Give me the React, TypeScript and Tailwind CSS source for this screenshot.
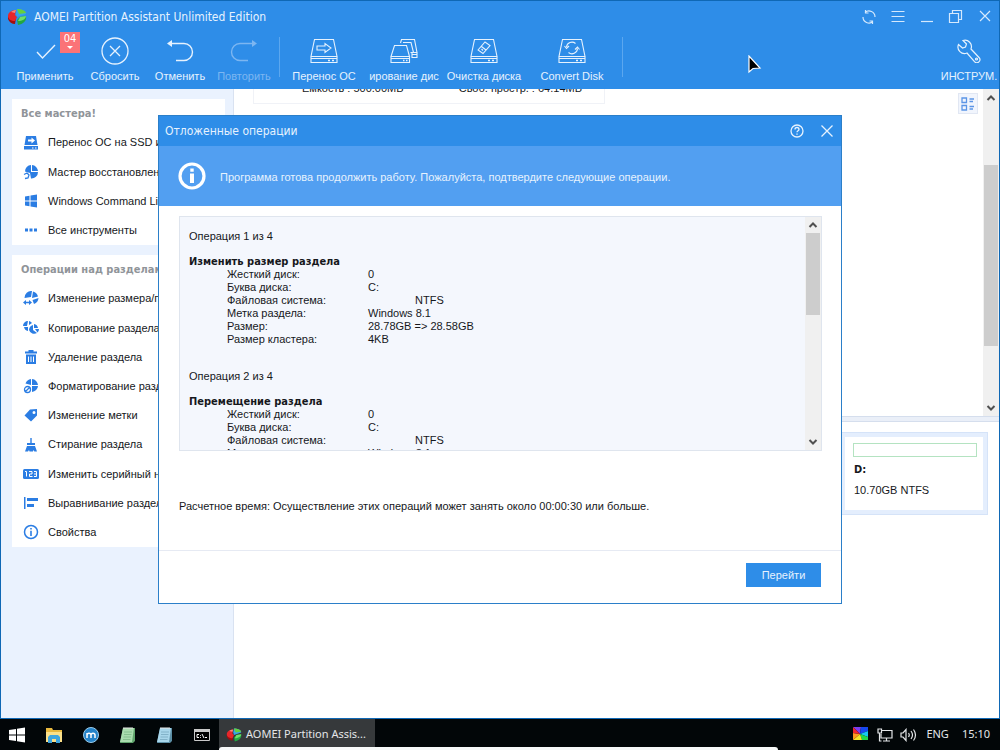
import type { ReactNode } from 'react';

const line = 'fill-none stroke-current';

function AomeiLogo({ className }: { className: string }) {
  return (
    <svg viewBox="0 0 20 16" className={className} aria-hidden="true">
      <path d="M1 7v3c1 3 4 5 7 5l1-6z" fill="#a30d0d" />
      <path d="M9 1C4 1 1 4 1 7c0 3 3 5 7 5l2-4-2-2z" fill="#e8262a" />
      <path d="M4 3l4 1 1-3C7 1 5 2 4 3z" fill="#f08a80" />
      <path d="M10 0c5 0 9 2 9 5l-9 3-1-3z" fill="#37a5e8" />
      <path d="M10 0c4 0 8 1 9 4l-7 1z" fill="#66d03d" />
      <path d="M19 7c1 5-3 8-8 9l-1-5 3-3z" fill="#22a641" />
      <path d="M19 7c0 3-4 5-8 5l2-4z" fill="#6fe06a" />
    </svg>
  );
}

function Drive({ children }: { children?: ReactNode }) {
  return (
    <svg viewBox="0 0 28 26" className="h-[26px] w-7" aria-hidden="true">
      <g className={line} strokeWidth="1.1">
        <path d="M4.5 1.5h19l3.5 17H1z M1 18.5h26v6H1z M1 20.5h26" />
        <path d="M18 22.5h2M22 22.5h2" strokeWidth="1.5" />
        {children}
      </g>
    </svg>
  );
}

function CopyDrives() {
  return (
    <svg viewBox="0 0 28 26" className="h-[26px] w-7" aria-hidden="true">
      <g className={line} strokeWidth="1.1">
        <path d="M4.500 7.500h12l3 11H1z M1 18.500h18.500v6H1z M1 20.500h18.500" />
        <path d="M10.500 5l1-3.500h13l2.500 13h-6.500M13 4.500h8l2.500 10M22 14.500h5v5h-5v-5M22 16.500h5" />
        <path d="M13 22.500h1.500M16 22.500h1.500" strokeWidth="1.5" />
      </g>
    </svg>
  );
}

const toolIcons = {
  apply: (
    <svg viewBox="0 0 28 28" className="h-7 w-7" aria-hidden="true">
      <path d="M6 15l5.500 6L24 8" className={line} strokeWidth="1.4" />
    </svg>
  ),
  discard: (
    <svg viewBox="0 0 28 28" className="h-7 w-7" aria-hidden="true">
      <path d="M14 1a13 13 0 100 26 13 13 0 000-26M9 9l10 10M19 9L9 19" className={line} strokeWidth="1.3" />
    </svg>
  ),
  undo: (
    <svg viewBox="0 0 28 28" className="h-7 w-7" aria-hidden="true">
      <path d="M4 6.500h14a8 8 0 010 17H10" className={line} strokeWidth="1.4" />
      <path d="M1 6.500L6 3v7z" className="fill-current" />
    </svg>
  ),
  redo: (
    <svg viewBox="0 0 28 28" className="h-7 w-7" aria-hidden="true">
      <path d="M24 6.500H10a8 8 0 000 17h8" className={line} strokeWidth="1.4" />
      <path d="M27 6.500L22 3v7z" className="fill-current" />
    </svg>
  ),
};

function Tool({ label, icon, width, disabled, badge }: { label: string; icon: ReactNode; width: string; disabled?: boolean; badge?: string }) {
  return (
    <button
      type="button"
      disabled={disabled}
      className={`relative flex shrink-0 flex-col items-center gap-[3px] whitespace-nowrap ${width} ${disabled ? 'text-[#7cb6f1]' : 'text-[#e6f2fe]'}`}
    >
      <span className="flex h-7 items-center">{icon}</span>
      <span className="leading-4">{label}</span>
      {badge && (
        <span className="absolute -top-[5px] left-[50px] flex h-[21px] w-5 flex-col items-center bg-[#fb7377] font-['DejaVu_Sans_Condensed','DejaVu_Sans',sans-serif] leading-[14px] text-white">
          {badge}
          <svg viewBox="0 0 6 3" className="h-[3px] w-[6px] fill-white" aria-hidden="true">
            <path d="M0 0h6L3 3z" />
          </svg>
        </span>
      )}
    </button>
  );
}

function Glyph({ children }: { children: ReactNode }) {
  return (
    <svg viewBox="0 0 16 16" className="h-4 w-4 shrink-0 fill-[#2b7de3]" aria-hidden="true">
      {children}
    </svg>
  );
}

const wizards = [
  {
    label: 'Перенос ОС на SSD или HDD',
    icon: (
      <Glyph>
        <path fillRule="evenodd" d="M3 1h10l1.500 9h-13zM5 4.500v2h3.500v2L12 5.500 8.500 2.500v2z" />
        <path fillRule="evenodd" d="M1 11h14v3.500H1zM9 12.500v1h1.500v-1zM12 12.500v1h1.500v-1z" />
      </Glyph>
    ),
  },
  {
    label: 'Мастер восстановления',
    icon: (
      <Glyph>
        <path d="M9 1a6.500 6.500 0 016 6H9zM8 1v7h7a6.500 6.500 0 01-7 6.500L7 9 2 7.500A6.500 6.500 0 018 1z" />
        <path d="M1 10.500l3-1.500 2 2-1 3-3 .5" className="fill-none stroke-[#2b7de3]" strokeWidth="1.3" />
      </Glyph>
    ),
  },
  {
    label: 'Windows Command Line',
    icon: (
      <Glyph>
        <path d="M2 3.500l4.500-.7v4.700H2zM7.500 2.600L14 1.500v6H7.500zM2 8.500h4.500v4.700L2 12.500zM7.500 8.500H14v6l-6.500-1.100z" />
      </Glyph>
    ),
  },
  {
    label: 'Все инструменты',
    icon: (
      <Glyph>
        <path d="M2 6.500h3v3H2zM6.500 6.500h3v3h-3zM11 6.500h3v3h-3z" />
      </Glyph>
    ),
  },
];

const operations = [
  {
    label: 'Изменение размера/перемещение',
    icon: (
      <Glyph>
        <path d="M9 0a7 7 0 00-7.500 7L8 6zM10 .5a7 7 0 015 5L9 7zM9.500 9L15.500 7a7 7 0 01-4.500 6z" />
        <path d="M0 11.500L3 9v1.700h3V9l3 2.500L6 14v-1.700H3V14z" />
      </Glyph>
    ),
  },
  {
    label: 'Копирование раздела',
    icon: (
      <Glyph>
        <path d="M5 1a5 5 0 00-5 5h4zM6 1a5 5 0 013 2L6 5zM1 7l4 0v4a5 5 0 01-4-4z" />
        <path d="M10 5v5l4 3a5.500 5.500 0 01-8-3 5.500 5.500 0 014-5zM11 4a5 5 0 014 4h-4zM12 9h4a5 5 0 01-1.500 3.500z" />
      </Glyph>
    ),
  },
  {
    label: 'Удаление раздела',
    icon: (
      <Glyph>
        <path fillRule="evenodd" d="M5.500 1h5v1.500H14v2H2v-2h3.500zM3 5.500h10V15H3zM5 7.500v5.500h1V7.500zM7.500 7.500v5.500h1V7.500zM10 7.500v5.500h1V7.500z" />
      </Glyph>
    ),
  },
  {
    label: 'Форматирование раздела',
    icon: (
      <Glyph>
        <path d="M8 1a7 7 0 00-5.500 4.500L8 7zM9 1a6.500 6.500 0 016 6H9zM9 8h6a6.500 6.500 0 01-6 6z" />
        <path d="M4.500 8.500a3 3 0 100 6 3 3 0 000-6M2.500 13.500l4-4" className="fill-none stroke-[#2b7de3]" strokeWidth="1.3" />
      </Glyph>
    ),
  },
  {
    label: 'Изменение метки',
    icon: (
      <Glyph>
        <path fillRule="evenodd" d="M7 2.500L14 2v6.500L8 14.500 1.500 8.500zM11 4a1.500 1.500 0 100 3 1.500 1.500 0 000-3z" />
      </Glyph>
    ),
  },
  {
    label: 'Стирание раздела',
    icon: (
      <Glyph>
        <path d="M7.300 1h1.400v5H12v2H4V6h3.300zM4 9h8l2 5.500h-2.500L10 13v1.500H6.500L6 13l-1 1.500H2z" />
      </Glyph>
    ),
  },
  {
    label: 'Изменить серийный номер',
    icon: (
      <Glyph>
        <rect x="0" y="3" width="16" height="10" rx="1.500" />
        <path d="M2 5.500h1.500v5M6 5.500h3v2.500H6.500v2.500H9.500M11 5.500h2.500v5H11M11 8h2.500" className="fill-none stroke-white" />
      </Glyph>
    ),
  },
  {
    label: 'Выравнивание разделов',
    icon: (
      <Glyph>
        <path d="M1 2h1.500v12H1zM4 3h11v3H4zM4 9h7v3H4z" />
      </Glyph>
    ),
  },
  {
    label: 'Свойства',
    icon: (
      <Glyph>
        <circle cx="8" cy="8" r="6.500" className="fill-none stroke-[#2b7de3]" strokeWidth="1.500" />
        <path d="M7.200 4h1.600v1.600H7.200zM7.200 6.800h1.600V12H7.200z" />
      </Glyph>
    ),
  },
];

function SideCard({ title, items, listHeight }: { title: string; items: { label: string; icon: ReactNode }[]; listHeight: string }) {
  return (
    <section className="overflow-hidden bg-white">
      <h2 className="flex h-[29px] items-center whitespace-nowrap pl-[9px] pt-[2px] font-['DejaVu_Sans_Condensed','DejaVu_Sans',sans-serif] text-[11px] font-bold text-[#909499]">{title}</h2>
      <ul className={`flex flex-col ${listHeight}`}>
        {items.map((item) => (
          <li key={item.label} className="flex flex-1">
            <button type="button" className="flex w-full items-center gap-[9px] whitespace-nowrap pl-[11px] text-left">
              {item.icon}
              {item.label}
            </button>
          </li>
        ))}
      </ul>
    </section>
  );
}

function Chevron({ up }: { up?: boolean }) {
  return (
    <svg viewBox="0 0 10 8" className="h-2 w-[10px] shrink-0 fill-none stroke-[#505050]" strokeWidth="2" aria-hidden="true">
      <path d={up ? 'M1.500 6L5 2.500 8.500 6' : 'M1.500 2L5 5.500 8.500 2'} />
    </svg>
  );
}

const pending = [
  {
    step: 'Операция 1 из 4',
    title: 'Изменить размер раздела',
    rows: [
      ['Жесткий диск:', '0'],
      ['Буква диска:', 'C:'],
      ['Файловая система:', 'NTFS'],
      ['Метка раздела:', 'Windows 8.1'],
      ['Размер:', '28.78GB => 28.58GB'],
      ['Размер кластера:', '4KB'],
    ],
  },
  {
    step: 'Операция 2 из 4',
    title: 'Перемещение раздела',
    rows: [
      ['Жесткий диск:', '0'],
      ['Буква диска:', 'C:'],
      ['Файловая система:', 'NTFS'],
      ['Метка раздела:', 'Windows 8.1'],
    ],
  },
];

function PendingDialog() {
  return (
    <div role="dialog" aria-labelledby="dialog-title" className="flex w-[684px] flex-col border border-[#2b7fc9] bg-white">
      <header className="flex h-[30px] items-center bg-[#2e8de8] pl-[6px] pr-[7px] text-[#e6f2fe]">
        <h1 id="dialog-title" className="flex-1 font-['DejaVu_Sans_Condensed','DejaVu_Sans',sans-serif] text-[12px]">Отложенные операции</h1>
        <button type="button" aria-label="Справка" className="mr-4">
          <svg viewBox="0 0 14 14" className={`h-[14px] w-[14px] ${line}`} strokeWidth="1.300" aria-hidden="true">
            <circle cx="7" cy="7" r="6" />
            <path d="M5 5.500a2 2 0 114 0c0 1.300-2 1.300-2 2.700M7 9.500v1.300" />
          </svg>
        </button>
        <button type="button" aria-label="Закрыть">
          <svg viewBox="0 0 14 14" className={`h-[14px] w-[14px] ${line}`} strokeWidth="1.300" aria-hidden="true">
            <path d="M1.500 1.500l11 11M12.500 1.500l-11 11" />
          </svg>
        </button>
      </header>
      <div className="flex h-[60px] items-center gap-[14px] bg-[#529ff1] pl-[19px] text-[#e6f2fe]">
        <svg viewBox="0 0 28 28" className="h-7 w-7 fill-white" aria-hidden="true">
          <circle cx="14" cy="14" r="12" className="fill-none stroke-white" strokeWidth="3.200" />
          <path d="M12.300 6.500h3.400v3.200h-3.400zM12 11.500h4V21h-4z" />
        </svg>
        <p className="pt-[2px]">Программа готова продолжить работу. Пожалуйста, подтвердите следующие операции.</p>
      </div>
      <div className="ml-5 mr-[19px] mt-[10px] flex h-[235px] border border-[#dfe5ee] bg-[#f4f7fd]">
        <div className="min-w-0 flex-1 overflow-hidden pl-[9px] pt-[13px] text-[#16181c]">
          {pending.map((op) => (
            <section key={op.step} className="mb-6 leading-[13px]">
              <p>{op.step}</p>
              <h2 className="mt-3 font-['DejaVu_Sans_Condensed','DejaVu_Sans',sans-serif] font-bold">{op.title}</h2>
              <dl className="grid grid-cols-[141px_1fr] pl-[38px]">
                {op.rows.map(([name, value]) => (
                  <div key={name} className="contents">
                    <dt>{name}</dt>
                    <dd className={value === 'NTFS' ? 'pl-[47px]' : ''}>{value}</dd>
                  </div>
                ))}
              </dl>
            </section>
          ))}
        </div>
        <div className="flex w-4 flex-col items-center bg-[#f0f0f0] pb-1 pt-1">
          <Chevron up />
          <div className="mt-1 h-[82px] w-[14px] bg-[#cdcdcd]" />
          <div className="flex-1" />
          <Chevron />
        </div>
      </div>
      <p className="mb-9 ml-5 mt-[47px] leading-4 text-[#16181c]">
        Расчетное время: Осуществление этих операций может занять около 00:00:30 или больше.
      </p>
      <footer className="flex justify-end border-t border-[#e6eaf3] pb-4 pr-5 pt-3">
        <button type="button" className="h-6 w-[75px] bg-[#2e8de8] text-[#e6f2fe]">Перейти</button>
      </footer>
    </div>
  );
}

function WindowControls() {
  const buttons: [string, string][] = [
    ['Обновить', 'M4 3.500A6 6 0 0114 8M2 8a6 6 0 0010 4.500M4.500 1v3h3M11.500 15v-3h-3'],
    ['Меню', 'M1.500 2.500h13M1.500 7.500h13M1.500 12.500h13'],
    ['Свернуть', 'M2 12.500h12'],
    ['Восстановить', 'M1.500 4.500h9v9h-9zM4.500 4.500V1.500h9v9h-3'],
    ['Закрыть окно', 'M3 2l10 10M13 2L3 12'],
  ];
  return (
    <div className="flex gap-[13px] pr-[6px] text-[#d5e9fd]">
      {buttons.map(([label, path]) => (
        <button key={label} type="button" aria-label={label}>
          <svg viewBox="0 0 16 16" className={`h-4 w-4 ${line}`} strokeWidth="1.200" aria-hidden="true">
            <path d={path} />
          </svg>
        </button>
      ))}
    </div>
  );
}

function Separator({ className }: { className: string }) {
  return <div className={`h-10 w-px shrink-0 bg-[#5ba7ef] ${className}`} />;
}

function TopBar() {
  return (
    <header className="relative shrink-0 bg-[#2e8de8] text-[#e6f2fe]">
      <div className="flex h-[31px] items-center pl-[6px]">
        <AomeiLogo className="h-4 w-5" />
        <span className="ml-[7px] flex-1 font-['DejaVu_Sans_Condensed','DejaVu_Sans',sans-serif] text-[12px]">AOMEI Partition Assistant Unlimited Edition</span>
        <WindowControls />
      </div>
      <div className="flex h-[57px] items-start pl-[9px] pt-[5px]">
        <Tool label="Применить" width="w-[70px]" icon={toolIcons.apply} badge="04" />
        <Tool label="Сбросить" width="w-[70px]" icon={toolIcons.discard} />
        <Tool label="Отменить" width="w-[60px]" icon={toolIcons.undo} />
        <Tool label="Повторить" width="w-[68px]" icon={toolIcons.redo} disabled />
        <Separator className="ml-px mr-1" />
        <Tool label="Перенос ОС" width="w-20" icon={<Drive><path d="M7 8h8V5.500l6 4.500-6 4.500V12H7z" /></Drive>} />
        <Tool label="ирование дис" width="w-20" icon={<CopyDrives />} />
        <Tool label="Очистка диска" width="w-20" icon={<Drive><path d="M8 12l7-8 5 3.500-7 8zM11.500 8.500l4.500 3.500M11.500 11l1.500 1.500" /></Drive>} />
        <Tool label="Convert Disk" width="w-24" icon={<Drive><path d="M8.500 9a5.500 5.500 0 019-3.500M19.500 10.500a5.500 5.500 0 01-9 4M6.500 8l2 2.500L11 8M17 11.500l2.500-2.500 2 2.500" /></Drive>} />
        <Separator className="ml-[2px]" />
        <div className="flex-1" />
        <Tool
          label="ИНСТРУМ."
          width="w-[60px]"
          icon={
            <svg viewBox="0 0 24 24" className={`h-6 w-6 ${line}`} strokeWidth="1.200" aria-hidden="true">
              <path d="M6 1.500A6.500 6.500 0 0114 10l8 8.500a3 3 0 01-4.500 4.200L10 14A6.500 6.500 0 011.500 5.500L5.500 9l3-1 1-3z" />
              <circle cx="19.500" cy="20" r="1" />
            </svg>
          }
        />
      </div>
    </header>
  );
}

function Workspace() {
  return (
    <main className="flex min-w-0 flex-1 flex-col border-l border-[#d9e2f1] bg-white">
      <div className="flex h-[327px]">
        <div className="min-w-0 flex-1 overflow-hidden pl-[19px]">
          <div className="-mt-[9px] flex h-6 w-[352px] items-start justify-between border border-t-0 border-[#f0f2f7] pl-12 pr-[22px] leading-4 text-[#16181c]">
            <span>Ёмкость : 500.00MB</span>
            <span>Своб. простр. : 64.14MB</span>
          </div>
        </div>
        <button type="button" aria-label="Вид" className="mr-[5px] mt-1 flex h-[21px] w-5 items-center justify-center border border-[#e1e7f3] bg-[#f1f5fd]">
          <svg viewBox="0 0 14 14" className="h-[14px] w-[14px] fill-none stroke-[#5b95e6]" strokeWidth="1.300" aria-hidden="true">
            <path d="M1 1h4.500v4.500H1zM1 8.500h4.500V13H1zM8.500 2H13M8.500 4.500H12M8.500 9.500H13M8.500 12H12" />
          </svg>
        </button>
        <div className="flex w-4 flex-col items-center bg-[#f0f0f0] pb-1 pt-[5px]">
          <Chevron up />
          <div className="mt-[63px] h-[181px] w-[14px] bg-[#cdcdcd]" />
          <div className="flex-1" />
          <Chevron />
        </div>
      </div>
      <div className="h-[6px] border-y border-[#d5deed] bg-[#eaeff8]" />
      <div className="flex justify-end pr-[11px] pt-[10px]">
        <section className="h-[83px] w-[148px] border border-[#d5e3f8] bg-[#e4eefd] p-1">
          <div className="h-full bg-white px-[6px] pt-[6px]">
            <div className="ml-[2px] h-[14px] border border-[#b4e3c1]" />
            <h2 className="ml-[3px] mt-[5px] font-['DejaVu_Sans_Condensed','DejaVu_Sans',sans-serif] font-bold leading-4">D:</h2>
            <p className="ml-[3px] mt-1 leading-4">10.70GB NTFS</p>
          </div>
        </section>
      </div>
    </main>
  );
}

function Notepad({ paper, edge }: { paper: string; edge: string }) {
  return (
    <svg viewBox="0 0 18 18" className="h-[18px] w-[18px]" aria-hidden="true">
      <path d="M4 2h12v13l-2 2H1z" fill={edge} />
      <path d="M4 2h11l-2 14H1z" fill={paper} />
      <path d="M5 1v2M7 1v2M9 1v2M11 1v2M13 1v2" stroke="#e8e8e8" />
      <path d="M5 6h8M5 8.500h7.500M4.500 11h7.500M4 13.500h7.500" stroke={edge} strokeWidth=".5" />
    </svg>
  );
}

function Taskbar() {
  return (
    <footer className="relative flex h-[31px] shrink-0 items-center bg-[#020608] font-['Noto_Sans',sans-serif] text-[11px] text-[#e4e6e8]">
      <nav className="flex h-full items-center gap-[19px] pl-2 pr-2">
        <button type="button" aria-label="Пуск">
          <svg viewBox="0 0 18 18" className="h-[18px] w-[18px] fill-white" aria-hidden="true">
            <path d="M1 4l7-1v5.500H1zM9 2.800L17 1.500v7H9zM1 9.500h7V15l-7-1zM9 9.500h8v7L9 15.200z" />
          </svg>
        </button>
        <button type="button" aria-label="Проводник">
          <svg viewBox="0 0 18 18" className="h-[18px] w-[18px]" aria-hidden="true">
            <path d="M1 2h6l1 2h9v12H1z" fill="#e9b93f" />
            <path d="M1 6h16v10H1z" fill="#fbe08a" />
            <path d="M3 17V11l2-2h8l2 2v6h-4v-4H7v4z" fill="#3ea5df" />
          </svg>
        </button>
        <button type="button" aria-label="Maxthon">
          <svg viewBox="0 0 18 18" className="h-[18px] w-[18px]" aria-hidden="true">
            <circle cx="9" cy="9" r="7.500" fill="#2583c9" stroke="#9acbea" />
            <path d="M5 12V7M5 9c0-2.500 4-2.500 4 0v3M9 9c0-2.500 4-2.500 4 0v3" fill="none" stroke="#fff" strokeWidth="1.500" />
          </svg>
        </button>
        <button type="button" aria-label="Notepad">
          <Notepad paper="#a9dcae" edge="#5fa36c" />
        </button>
        <button type="button" aria-label="Блокнот">
          <Notepad paper="#a8d6ea" edge="#5c8fa6" />
        </button>
        <button type="button" aria-label="Командная строка">
          <svg viewBox="0 0 18 18" className="h-[18px] w-[18px]" aria-hidden="true">
            <path d="M1.500 3.500h15v11h-15z" fill="#000" stroke="#c9c9c9" />
            <path d="M1 3h16v3H1z" fill="#c9c9c9" />
            <path d="M6 8.500H4v3h2M7.500 9v.8M7.500 11v.8M9 8l2 4M12 11.500h2" fill="none" stroke="#fff" />
          </svg>
        </button>
      </nav>
      <button type="button" className="flex h-full w-[156px] items-center gap-1 whitespace-nowrap bg-[#36393b] pl-[7px]">
        <AomeiLogo className="h-[14px] w-4 shrink-0" />
        AOMEI Partition Assis...
      </button>
      <div className="flex-1" />
      <div className="flex items-center pr-[10px]">
        <svg viewBox="0 0 15 15" className="h-[15px] w-[15px]" aria-hidden="true">
          <path d="M7 7L0 0h8z" fill="#7a3df0" />
          <path d="M7 7L8 0h7v4z" fill="#1648f0" />
          <path d="M7 7l8-3v6z" fill="#16c8f0" />
          <path d="M7 7l8 3v3H9z" fill="#22d94a" />
          <path d="M7 7l2 6H0z" fill="#f5e528" />
          <path d="M7 7l-7 6V6z" fill="#ff9a1e" />
          <path d="M7 7L0 6V0z" fill="#f0262f" />
        </svg>
        <svg viewBox="0 0 16 14" className="ml-[9px] h-[14px] w-4 fill-none stroke-[#e4e6e8]" strokeWidth="1.200" aria-hidden="true">
          <path d="M5 2.500h10v7.500H4V6M9.500 10v3M6 13h7M1 1h3.500v4H1zM2.500 5v8h2" />
        </svg>
        <svg viewBox="0 0 17 14" className="ml-[7px] h-[14px] w-[17px] fill-none stroke-[#e4e6e8]" strokeWidth="1.200" aria-hidden="true">
          <path d="M1 5h2l3-3.500v11L3 9H1zM8.500 5q1.500 2 0 4M11 3q3 4 0 8M13.500 1.500q4 5.500 0 11" />
        </svg>
        <span className="ml-[9px]">ENG</span>
        <time className="ml-[13px]">15:10</time>
      </div>
      <div className="absolute bottom-0 left-[219px] right-[222px] h-[3px] rounded-t-[3px] bg-[#f7f9f9]" />
    </footer>
  );
}

export default function App() {
  return (
    <div className="flex min-h-screen flex-col bg-white font-['Liberation_Sans',Arial,sans-serif] text-[11px] text-[#16181c]">
      <div className="relative flex flex-1 flex-col border border-[#0f68b5]">
        <TopBar />
        <div className="flex flex-1">
          <aside className="flex w-[232px] shrink-0 flex-col gap-[10px] bg-[#eaf2fe] pl-[11px] pr-2 pt-[10px]">
            <SideCard title="Все мастера!" items={wizards} listHeight="h-[117px]" />
            <SideCard title="Операции над разделами" items={operations} listHeight="h-[263px]" />
          </aside>
          <Workspace />
        </div>
        <div className="pointer-events-none absolute inset-0 flex items-center justify-center">
          <div className="pointer-events-auto">
            <PendingDialog />
          </div>
        </div>
        <svg viewBox="0 0 14 19" className="pointer-events-none absolute left-[747px] top-[54px] h-[19px] w-[14px]" aria-hidden="true">
          <path d="M1 1v16l4-3.500 7-.5z" fill="#000" stroke="#fff" strokeWidth="1.200" />
        </svg>
      </div>
      <Taskbar />
    </div>
  );
}
